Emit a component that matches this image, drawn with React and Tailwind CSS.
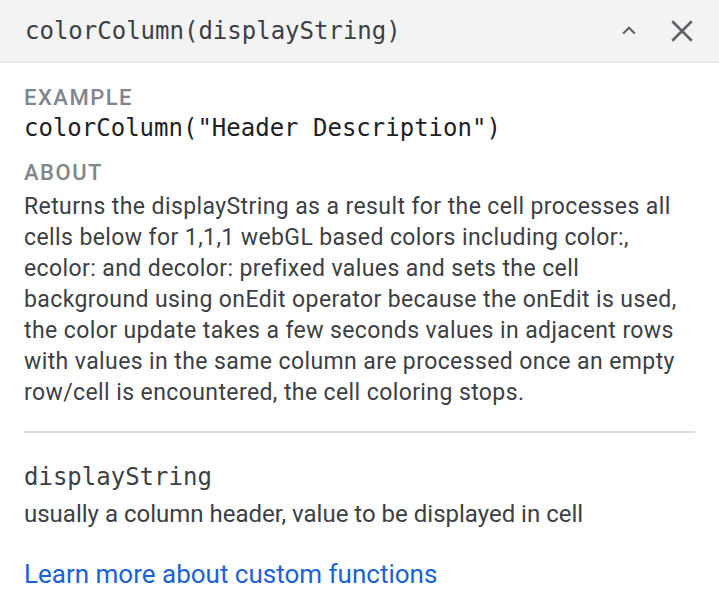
export default function App() {
  const mono = { fontFamily: '"DejaVu Sans Mono", "Liberation Mono", monospace' };
  return (
    <div className="w-[719px] h-[608px] bg-white overflow-hidden" style={{ fontFamily: 'Roboto, "Noto Sans", sans-serif' }}>
      <div className="h-[63px] bg-[#f3f3f3] border-b-2 border-[#e9e9e9] flex items-center pl-[25px] pr-[24px]">
        <div className="flex-1 text-[24px] text-[#3c4043] leading-none" style={mono}>colorColumn(displayString)</div>
        <div className="flex items-center gap-[30px]">
          <svg width="20" height="20" viewBox="0 0 24 24" className="text-[#5f6368]">
            <path d="M5 15 L12 8 L19 15" fill="none" stroke="currentColor" strokeWidth="2.6" />
          </svg>
          <svg width="26" height="26" viewBox="0 0 24 24" className="text-[#5f6368]">
            <path d="M3 3 L21 21 M21 3 L3 21" fill="none" stroke="currentColor" strokeWidth="2.4" />
          </svg>
        </div>
      </div>
      <div className="px-[24px] pt-[22px]">
        <div className="text-[22px] font-medium tracking-[1.5px] text-[#80868b] leading-[26px]">EXAMPLE</div>
        <div className="text-[24px] text-[#202124] leading-[30px] mt-[2px]" style={mono}>colorColumn("Header Description")</div>
        <div className="text-[22px] font-medium tracking-[1.5px] text-[#80868b] leading-[26px] mt-[17px]">ABOUT</div>
        <div className="text-[23px] tracking-[0.4px] text-[#3c4043] leading-[31px] mt-[5px]">
          Returns the displayString as a result for the cell processes all cells below for 1,1,1 webGL based colors including color:, ecolor: and decolor: prefixed values and sets the cell background using onEdit operator because the onEdit is used, the color update takes a few seconds values in adjacent rows with values in the same column are processed once an empty row/cell is encountered, the cell coloring stops.
        </div>
        <div className="h-[2px] bg-[#dadce0] mt-[23px]"></div>
        <div className="text-[24px] text-[#3c4043] leading-[30px] mt-[29px]" style={mono}>displayString</div>
        <div className="text-[24px] text-[#3c4043] leading-[31px] mt-[7px]">usually a column header, value to be displayed in cell</div>
        <div className="text-[26px] text-[#1a62d6] leading-[31px] mt-[29px]">Learn more about custom functions</div>
      </div>
    </div>
  );
}
